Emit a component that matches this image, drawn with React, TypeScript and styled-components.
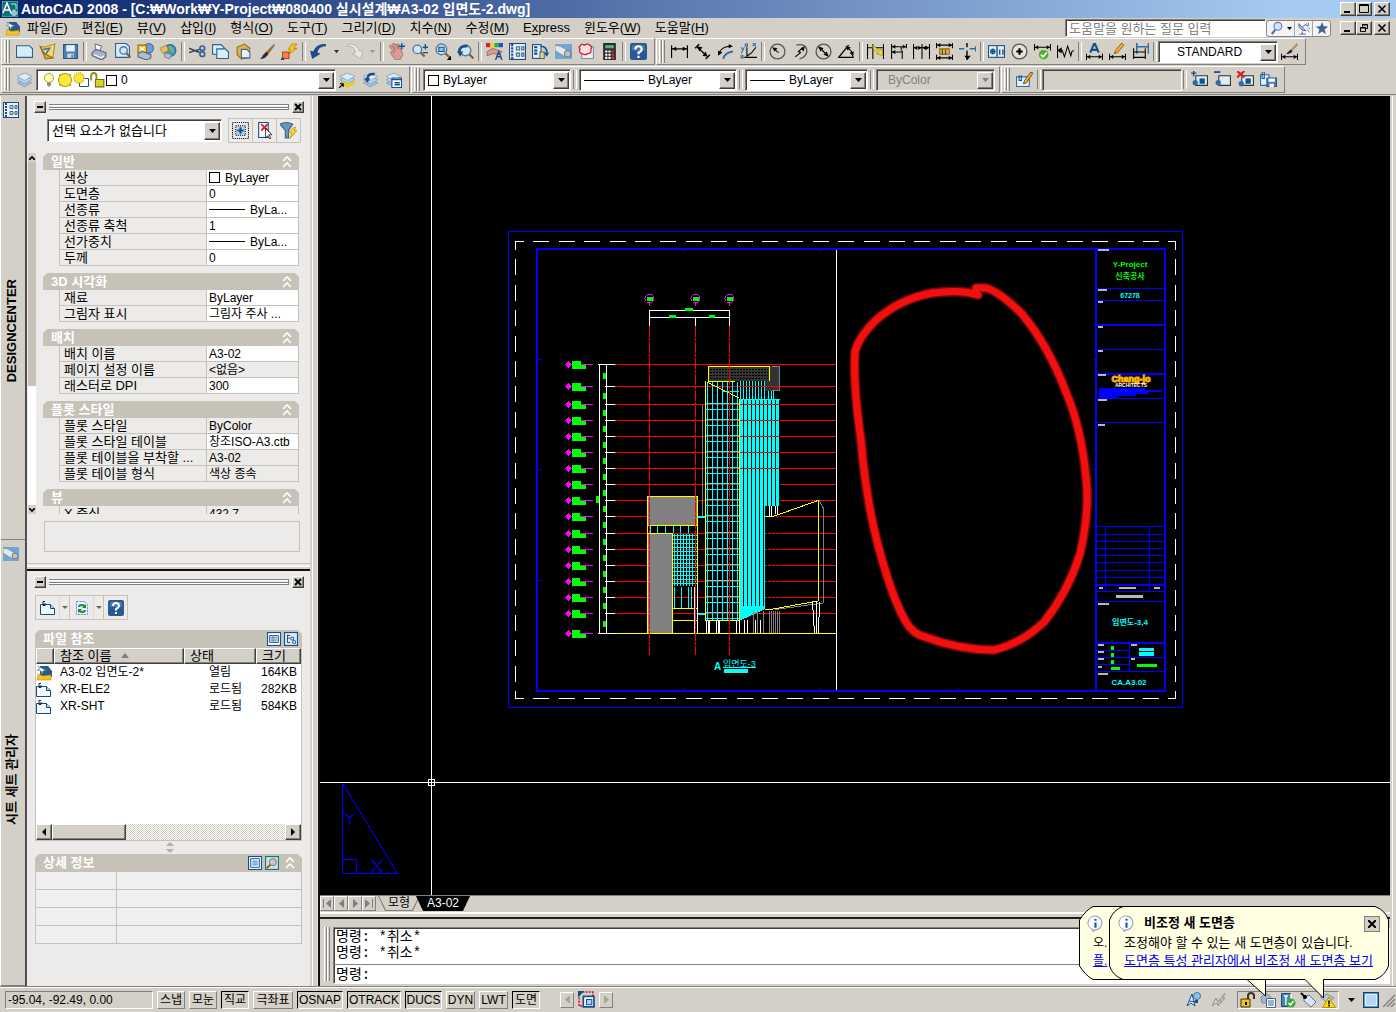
import React, { ReactNode } from 'react';
import styled, { createGlobalStyle, css } from 'styled-components';

const FACE = '#d4d0c8';
const PANEL = '#ecebea';
const HEAD = '#c6c2b8';
const SHADOW = '#808080';
const DARK = '#404040';
const FONT = '"Liberation Sans", "Noto Sans CJK KR", sans-serif';
const MONO = '"Liberation Mono", "Noto Sans CJK KR", monospace';

const Global = createGlobalStyle`
  * { box-sizing: border-box; }
  body { margin: 0; background: ${FACE}; font: 13px/16px ${FONT}; color: #000; overflow: hidden; }
  button, input, select { font: inherit; color: inherit; margin: 0; padding: 0; border: 0; border-radius: 0; background: none; }
  svg { display: block; }
  table { border-collapse: separate; border-spacing: 0; }
`;

const raised = css`
  background: ${FACE};
  border: 1px solid;
  border-color: #fff ${DARK} ${DARK} #fff;
  box-shadow: inset -1px -1px 0 ${SHADOW};
`;
const sunken = css`
  border: 1px solid;
  border-color: ${SHADOW} #fff #fff ${SHADOW};
  box-shadow: inset 1px 1px 0 ${DARK};
`;

/* ---------- icons ---------- */

const page = (x = 1, y = 3, w = 13, h = 11) => (
  <path d={`M${x + 0.5} ${y + 0.5}h${w - 4}l3 3v${h - 4}h-${w - 1}z`} fill="#d8ecf8" stroke="#2d5f92" />
);
const lens = (x: number, y: number, r = 4) => (
  <>
    <path d={`M${x + r * 0.7} ${y + r * 0.7}l4 4`} stroke="#8a5a3c" strokeWidth="2" />
    <circle cx={x} cy={y} r={r} fill="#cfe6f6" stroke="#56789a" strokeWidth="1.3" />
  </>
);
const layerStack = (top = '#dcebf8') => (
  <>
    <path d="M1 11l7 4 7-4-7-3z" fill="#9fbdd8" stroke="#7f9cba" strokeWidth=".7" />
    <path d="M1 8l7 4 7-4-7-3z" fill="#bcd4ea" stroke="#7f9cba" strokeWidth=".7" />
    <path d="M1 5l7 4 7-4-7-3z" fill={top} stroke="#7f9cba" strokeWidth=".7" />
  </>
);
const dimEnds = (y: number) => (
  <>
    <path d={`M.5 ${y - 3}v6M15.5 ${y - 3}v6M1 ${y}h14`} stroke="#000" />
    <path d={`M1 ${y}l3-2v4zM15 ${y}l-3-2v4z`} fill="#000" />
  </>
);
const sheet = (
  <>
    <rect x=".5" y=".5" width="15" height="15" fill="#e4f0fa" stroke="#1d4a82" />
    <path d="M3 1v14" stroke="#1d4a82" strokeWidth="2" strokeDasharray="2 1" />
    <path d="M7 3.500h3v3H7zM12 3.500h2v3h-2zM7 9.500h3v3H7zM12 9.500h2v3h-2z" fill="#f0d878" stroke="#386ca0" />
  </>
);
const xref = (
  <>
    <path d="M.5 4.500h10l4 4v6H.5z" fill="#f4faff" stroke="#0e4a86" />
    <path d="M10.500 4.500v4h4" fill="#b8dcf2" stroke="#0e4a86" />
    <path d="M5 1.500H3v4h2V3" fill="none" stroke="#222" />
  </>
);
const satellite = (
  <>
    <path d="M2 3q0 8 8 8z" fill="#b8c6e2" stroke="#42598c" />
    <path d="M6 7l5-4M10 5h3V2M6 12v3M3 15h7" stroke="#42598c" fill="none" />
    <path d="M11 9l3 4M12 7l3 2" stroke="#7d8dba" />
  </>
);

const ICONS: Record<string, ReactNode> = {
  app: (
    <>
      <rect width="16" height="16" fill="#0f7078" />
      <path d="M1 12L5 2l4 10M3 9h5" stroke="#fff" strokeWidth="1.500" fill="none" />
      <path d="M9 3h5v5M12 8v7M8 12h8M10 10h4v4h-4z" stroke="#bfe6ea" fill="none" />
      <path d="M0 0h16v16H0z" fill="none" stroke="#6fc0c4" />
    </>
  ),
  dwg: (
    <>
      <path d="M4 1h8l4 5v6H4z" fill="#2f5888" />
      <path d="M5 2l1 1M2 1l2 3-3 1 4 1 1 3 1-3 3-1-3-1z" fill="#fff" stroke="#3d74ac" strokeWidth=".6" />
      <path d="M1 15l1-6 5 2 8-1v5z" fill="#f6c41c" stroke="#c48c0c" strokeWidth=".6" />
    </>
  ),
  fresh: page(0, 2, 16, 12),
  open: (
    <>
      <path d="M1 3l4 1 10-3-2 13-8-4z" fill="#f4d674" stroke="#b88a1c" />
      <path d="M1 3l4 7 8 4-7 1z" fill="#dca83a" stroke="#8f6a14" />
      <path d="M4 6l6-1-4 6" stroke="#4878a4" strokeWidth="1.500" fill="none" />
    </>
  ),
  save: (
    <>
      <path d="M1.500 1.500h13v13h-13z" fill="#4f7fb8" stroke="#27558c" />
      <path d="M4 2h8v6H4z" fill="#e8f2fb" />
      <path d="M5 10h6v4H5z" fill="#cfd8e2" />
      <path d="M9 11h1v3H9z" fill="#27558c" />
    </>
  ),
  print: (
    <>
      <path d="M4 1l6 2-2 5H4z" fill="#fff" stroke="#6d7894" />
      <path d="M1 9l4-3 9 3v4l-4 3-9-4z" fill="#a9b2c8" stroke="#566182" />
      <path d="M3 11l7 3 2-2" stroke="#fff" fill="none" />
    </>
  ),
  preview: (
    <>
      {page(1, 0, 14, 14)}
      {lens(9, 7, 3.5)}
    </>
  ),
  publish: (
    <>
      <circle cx="11" cy="5" r="4.500" fill="#6aa2d4" stroke="#3d6a9c" />
      <path d="M1 2h8v7H1z" fill="#f0c63c" stroke="#94700c" />
      <path d="M3 4l4 3M7 4L3 7" stroke="#fff" />
      <path d="M1 10l4-2 8 3v3l-4 2-8-3z" fill="#b4bccc" stroke="#566182" />
    </>
  ),
  web: (
    <>
      <circle cx="9.500" cy="7" r="5.500" fill="#4a94cc" stroke="#2c6494" />
      <path d="M8 2q5 2 5 6-4 1-5-6z" fill="#6cc04c" />
      <path d="M0 5l6-3 2 5-5 3z" fill="#e8c24a" stroke="#8c741c" strokeWidth=".6" />
      <path d="M5 9l6 2-2 4-5-2z" fill="#b4bccc" stroke="#566182" strokeWidth=".6" />
    </>
  ),
  cut: (
    <>
      <path d="M0 5l10 4M0 9l10-3" stroke="#3a4456" strokeWidth="1.400" />
      <circle cx="12.500" cy="5" r="2.200" fill="none" stroke="#3b5f94" strokeWidth="1.600" />
      <circle cx="12.500" cy="10.500" r="2.200" fill="none" stroke="#3b5f94" strokeWidth="1.600" />
    </>
  ),
  copy: (
    <>
      {page(0, 1, 12, 10)}
      {page(4, 5, 12, 10)}
    </>
  ),
  paste: (
    <>
      <path d="M2 4l7-3 5 4-1 9-7 1-4-4z" fill="#e0b24a" stroke="#94701c" />
      <path d="M6 6h5l3 3v5H6z" fill="#e6f2fc" stroke="#3b6a9c" />
    </>
  ),
  brush: (
    <>
      <path d="M15 1L8 8l2 2 6-8z" fill="#9c6a44" />
      <path d="M8 8l2 2q-3 5-8 5 2-2 3-4z" fill="#2c2c34" />
    </>
  ),
  bolt: (
    <>
      <path d="M10 1h5l-3 4h3l-8 6 2-5H7z" fill="#f8c820" stroke="#b4780c" strokeWidth=".7" />
      <path d="M1.500 8.500h6v6h-6z" fill="#f4814c" stroke="#c03c14" />
      <path d="M0 15h3" stroke="#14508c" strokeWidth="2" />
    </>
  ),
  undo: <path d="M2 15l-2-8 3 1Q6 0 15 1v2Q8 3 7 9l3 1z" fill="#1f4c8a" />,
  redo: <path d="M14 15l2-8-3 1Q10 0 2 1v2q6 0 7 6l-3 1z" fill="#e6e6e2" stroke="#a9a9a4" strokeWidth=".7" />,
  caret: <path d="M5 6h6l-3 4z" fill="#1a2c66" />,
  caretDim: <path d="M5 6h6l-3 4z" fill="#98949c" />,
  pan: (
    <>
      <path d="M1 3l2-1 4 5-3-6 2-1 4 6-2-5 2 0 4 10-3 5H7L2 9l1-1 3 1z" fill="#d99c94" stroke="#a4605c" strokeWidth=".7" />
      <path d="M13 0v6M10 3h6" stroke="#14508c" strokeWidth="1.300" />
    </>
  ),
  zoomRt: (
    <>
      {lens(6, 6)}
      <path d="M11 4h5M13.500 1v5M11 9h5" stroke="#14508c" strokeWidth="1.200" />
    </>
  ),
  zoomWin: (
    <>
      {lens(7, 6, 5)}
      <path d="M4.500 4h5v4h-5z" fill="#8cc0e8" stroke="#14508c" />
      <path d="M16 12v4h-4z" />
    </>
  ),
  zoomPrev: (
    <>
      {lens(8, 7, 5)}
      <path d="M2 9q0-7 8-6" stroke="#1f4c8a" strokeWidth="2.500" fill="none" />
      <path d="M0 8h6l-3 5z" fill="#1f4c8a" />
    </>
  ),
  props: (
    <>
      <path d="M0 0h4v4H0z" fill="#e02020" />
      <path d="M4 0h4v4H4z" fill="#f0d020" />
      <path d="M8 0h4v4H8z" fill="#20b050" />
      <path d="M12 0h4v4h-4z" fill="#2050d0" />
      <path d="M1 8l5-3 9 3-2 3-6-1-6 2z" fill="#d99c94" stroke="#8c5850" strokeWidth=".7" />
      <path d="M9 16l3-8 3 8M10 13h4" stroke="#14508c" fill="none" strokeWidth="1.300" />
    </>
  ),
  center: sheet,
  palettes: (
    <>
      <rect x=".5" y="1.500" width="8" height="13" fill="#e4f0fa" stroke="#1d4a82" />
      <path d="M2 4h3M2 7h3M2 10h3" stroke="#1d4a82" strokeWidth="2" />
      <path d="M8 3q6 0 6 6" stroke="#14508c" fill="none" strokeWidth="1.500" />
      <path d="M7.500 8.500h4v6h-4z" fill="#f0d878" stroke="#386ca0" />
      <path d="M11 9h5l-2 4z" fill="#14508c" />
    </>
  ),
  sheets: (
    <>
      <path d="M0 1h16v14H0z" fill="#6fa6d4" />
      <path d="M0 2l5 1 10 6-1 5-6-2-8-5z" fill="#e4e8ea" stroke="#7d8c94" strokeWidth=".7" />
      <circle cx="12" cy="10" r="3" fill="#b9c2c6" stroke="#6c7c84" />
    </>
  ),
  markup: (
    <>
      <path d="M3.500 3.500h11v11h-11z" fill="#eaf2f8" stroke="#7890a4" />
      <path d="M2 3q1-3 4-1 3-2 5 0 3 2 1 4 1 4-3 4-3 2-5 0-4-1-2-4-2-2 0-3z" fill="#fbe0e0" stroke="#d02030" strokeWidth="1.200" />
    </>
  ),
  calc: (
    <>
      <path d="M2 0h12v16H2z" fill="#2c2c30" />
      <path d="M4 2h8v3H4z" fill="#5cb46c" />
      <path d="M4 7h2v2H4zM7 7h2v2H7zM4 10h2v2H4zM7 10h2v2H7zM4 13h2v2H4zM7 13h2v2H7z" fill="#fff" />
      <path d="M10 7h2v2h-2zM10 10h2v2h-2zM10 13h2v2h-2z" fill="#e04040" />
    </>
  ),
  help: (
    <>
      <rect width="16" height="16" rx="2" fill="#2a5a94" />
      <path d="M2 2h12v5H2z" fill="#5a8cc0" opacity=".6" />
      <path d="M5 6q0-3 3-3t3 3q0 1.500-3 3v1.500M8 12v2" stroke="#fff" strokeWidth="2" fill="none" />
    </>
  ),
  dimLinear: (
    <>
      <path d="M.5 2v12M15.500 2v12M1 5.500h14" stroke="#000" strokeWidth="1.200" />
      <path d="M1 5.500l4-2v4zM15 5.500l-4-2v4z" />
    </>
  ),
  dimAligned: (
    <>
      <path d="M1 5l4-4M11 15l4-4M3 4l9 8" stroke="#000" strokeWidth="1.200" />
      <path d="M3 3l5 1-3 4zM13 13l-5-1 3-4z" />
    </>
  ),
  dimArc: (
    <>
      <path d="M2 10Q4 3 13 3" stroke="#000" fill="none" />
      <path d="M1 12l0-5 4 2zM15 3l-4-2v4z" />
      <path d="M6 15q1-6 9-7" stroke="#2f6ca8" strokeWidth="1.800" fill="none" />
    </>
  ),
  dimOrd: (
    <>
      <path d="M6.500 4v10M4 13.500h12M7 12l4-3 4-5" stroke="#000" fill="none" />
      <path d="M1 4l2 3M4 4l-3 6M12 0l3 3M15 0l-3 3M5 1h2v2H5zM1 12h2v2H1z" stroke="#2f6ca8" fill="none" />
    </>
  ),
  dimRadius: (
    <>
      <circle cx="8" cy="8" r="7" fill="none" stroke="#555" strokeWidth="1.200" />
      <path d="M9 9L4 5" stroke="#000" />
      <path d="M3 4l5 1-3 3z" />
    </>
  ),
  dimJog: (
    <>
      <path d="M4 2q9-2 10 5 0 6-7 8" fill="none" stroke="#555" strokeWidth="1.200" />
      <path d="M3 13l5-4-2-1 5-4" fill="none" stroke="#000" />
      <path d="M12 3l-1 5-3-3z" />
    </>
  ),
  dimDia: (
    <>
      <circle cx="8" cy="8" r="7" fill="none" stroke="#555" strokeWidth="1.200" />
      <path d="M4 4l8 8" stroke="#000" />
      <path d="M3 3l5 2-3 3zM13 13l-5-2 3-3z" />
    </>
  ),
  dimAngle: (
    <>
      <path d="M0 13.500h15M1 13l9-11" stroke="#000" strokeWidth="1.300" />
      <path d="M8 4q6 3 6 9" stroke="#000" fill="none" />
      <path d="M7 3l5 1-3 3zM14 13l-3-4 4-1z" />
    </>
  ),
  dimQuick: (
    <>
      <path d="M.5 1v14M5.500 1v14M15.500 1v14M1 4.500h14" stroke="#000" />
      <path d="M5 2l7 5 2-1 1 6-6-2 2-1-5-3z" fill="#f8d820" stroke="#8c8410" strokeWidth=".6" />
    </>
  ),
  dimBase: (
    <>
      <path d="M1.500 1v14M10.500 3v4M15.500 1v4M2 3.500h13M2 8.500h9M11.500 7v8" stroke="#000" />
      <path d="M2 3.500l3-2v4zM15 3.500l-3-2v4zM2 8.500l3-2v4z" />
    </>
  ),
  dimCont: (
    <>
      <path d="M.5 1v14M8.500 1v14M15.500 1v14M1 4.500h14" stroke="#000" />
      <path d="M1 4.500l3-2v4zM8 4.500l-3-2v4zM9 4.500l3-2v4zM15 4.500l-3-2v4z" />
    </>
  ),
  dimSpace: (
    <>
      {dimEnds(2)}
      {dimEnds(14)}
      <path d="M3.500 5.500h9v5h-9z" fill="#f0b42c" stroke="#94640c" />
      <path d="M6 6v5M9 6v5" stroke="#1d4a82" />
    </>
  ),
  dimBreak: (
    <>
      <path d="M0 5.500h5M10 5.500h5" stroke="#2f6ca8" strokeWidth="1.400" />
      <path d="M7.500 0v4M7.500 7v9" stroke="#000" strokeWidth="1.300" />
      <path d="M8 16l-3-4h6z" />
      <path d="M15.500 3v5" stroke="#2f6ca8" />
    </>
  ),
  tol: (
    <>
      <rect x=".5" y="2.500" width="15" height="11" fill="#e4f0fa" stroke="#14508c" />
      <path d="M8.500 3v10M11 6v5M14 6v5M2 8h5M4.500 5.500v5" stroke="#14508c" strokeWidth="1.300" />
      <circle cx="4.500" cy="8" r="2" fill="none" stroke="#14508c" />
    </>
  ),
  centerMark: (
    <>
      <circle cx="8" cy="8" r="7" fill="#e4e2dc" stroke="#555" strokeWidth="1.200" />
      <path d="M8 5v6M5 8h6" stroke="#000" strokeWidth="2" />
    </>
  ),
  inspect: (
    <>
      {dimEnds(4)}
      <circle cx="9" cy="11" r="4.500" fill="#4cb428" />
      <path d="M6.500 11l2 2 3.500-4" stroke="#fff" strokeWidth="1.500" fill="none" />
    </>
  ),
  jogLine: <path d="M.5 2v12M1 7h4l2 6 3-10 3 9 1-4 2-1M1 7l3-2v4z" stroke="#000" fill="none" />,
  dimEdit: (
    <>
      <path d="M4 9l3.500-8h1L12 9M5.500 6.500h5" stroke="#14508c" strokeWidth="2" fill="none" />
      {dimEnds(13)}
    </>
  ),
  dimText: (
    <>
      <path d="M5 10l1-3 6-7 2 2-6 7z" fill="#f0b42c" stroke="#94440c" strokeWidth=".8" />
      {dimEnds(13)}
    </>
  ),
  dimUpdate: (
    <>
      <path d="M4.500 0v10M15.500 0v10M5 3.500h10" stroke="#2f6ca8" strokeWidth="1.500" />
      <path d="M1.500 5v10M12.500 5v10M2 8.500h10M2 13.500h10" stroke="#000" />
    </>
  ),
  dimStyle: (
    <>
      <path d="M15 0L9 6l1 2 6-6z" fill="#c08c5c" />
      <path d="M9 6l2 2q-3 3-6 2z" fill="#222" />
      {dimEnds(13)}
    </>
  ),
  layers: layerStack(),
  layerCur: (
    <>
      {layerStack()}
      <path d="M3 9l5 3 7-3v3l-7 4-5-3z" fill="#e8d020" />
      <path d="M0 16l4-4M1 12h3v3" stroke="#000" fill="none" />
    </>
  ),
  layerPrev: (
    <>
      {layerStack()}
      <path d="M5 8q0-6 7-5" stroke="#1f4c8a" strokeWidth="2.500" fill="none" />
      <path d="M2 7h6l-3 4z" fill="#1f4c8a" />
    </>
  ),
  layerState: (
    <>
      {layerStack()}
      <path d="M6.500 6.500h9v9h-9z" fill="#fff" stroke="#14508c" />
      <path d="M6 8h10M9 11h5M9 13h5" stroke="#14508c" strokeWidth="1.500" />
    </>
  ),
  bulb: (
    <>
      <circle cx="8" cy="6" r="4.500" fill="#ffffb0" stroke="#a8a030" />
      <path d="M6 10.500h4v3L8 15l-2-1.500z" fill="#909090" />
    </>
  ),
  sun: (
    <>
      <path d="M2 2h12v12H2z" fill="#c8b818" />
      <circle cx="8" cy="8" r="6.500" fill="#fce838" stroke="#a89818" />
    </>
  ),
  sunPage: (
    <>
      <path d="M6.500 6.500h9v8h-9z" fill="#fff" stroke="#14508c" />
      <circle cx="6" cy="6" r="5" fill="#fce838" stroke="#c8b818" strokeWidth="2" strokeDasharray="1 1" />
    </>
  ),
  unlock: (
    <>
      <path d="M6 7h8v7H6z" fill="#d8d428" stroke="#6c6c10" />
      <path d="M2 8V4q0-3 2.500-3T7 4v3" stroke="#8c8c20" strokeWidth="1.800" fill="none" />
    </>
  ),
  refEdit: (
    <>
      <path d="M.5 5.500h12v9H.5z" fill="#e4f2fc" stroke="#2d6ca4" />
      <path d="M3 4v5h2V4" stroke="#14508c" fill="none" />
      <path d="M7 12l1-3 6-8 2 1-6 9z" fill="#f0b42c" stroke="#5c3c14" strokeWidth=".8" />
    </>
  ),
  refAdd: (
    <>
      <path d="M4.500 4.500h11v9h-11z" fill="#dcecf8" stroke="#333" />
      <path d="M0 2h5M2.500 0v5" stroke="#14508c" strokeWidth="1.400" />
      <path d="M8 7h5v5H8z" fill="#14508c" />
      <circle cx="4" cy="11" r="2.500" fill="#2f6ca8" />
    </>
  ),
  refSub: (
    <>
      <path d="M4.500 4.500h11v9h-11z" fill="#dcecf8" stroke="#333" />
      <path d="M0 1h6" stroke="#14508c" strokeWidth="1.600" />
      <circle cx="4" cy="11" r="2.500" fill="#2f6ca8" />
    </>
  ),
  refDiscard: (
    <>
      <path d="M4.500 4.500h11v9h-11z" fill="#dcecf8" stroke="#333" />
      <path d="M8 7h5v5H8z" fill="#14508c" />
      <circle cx="4" cy="12" r="2.500" fill="#2f6ca8" />
      <path d="M0 0l7 6M7 0L0 6" stroke="#d42020" strokeWidth="2" />
    </>
  ),
  refSave: (
    <>
      <path d="M.5 3.500h8v10h-8z" fill="#e4f2fc" stroke="#2d6ca4" />
      <path d="M2 1v6h2V1" stroke="#14508c" fill="none" />
      <path d="M6.500 6.500h9v8h-9z" fill="#4f7fb8" stroke="#27558c" />
      <path d="M8 7h6v3H8zM9 12h4v3H9z" fill="#fff" />
    </>
  ),
  search: (
    <>
      <path d="M6 10l-4 5" stroke="#5a6ea4" strokeWidth="2.500" />
      <circle cx="9" cy="6" r="4.500" fill="#cfe6f6" stroke="#6a80b4" strokeWidth="1.300" />
    </>
  ),
  satellite,
  star: <path d="M8 1l2 5 5 .3-4 3.400L12.500 15 8 12l-4.500 3L5 9.700 1 6.300 6 6z" fill="#4a5f94" />,
  quickSel: (
    <>
      <path d="M.5 .5h15v15H.5z" fill="none" stroke="#000" strokeDasharray="1 1" />
      <path d="M3.500 3.500h9v9h-9z" fill="#b9d6ee" stroke="#000" strokeDasharray="1 1" />
      <path d="M8 5v6M5 8h6" stroke="#14508c" strokeWidth="2" />
    </>
  ),
  pick: (
    <>
      <path d="M2.500 .5h9v14h-9z" fill="#f4faff" stroke="#1d4a82" />
      <path d="M5 2l6 6M11 2L5 8" stroke="#d42020" strokeWidth="1.700" />
      <path d="M9 6v9l2-2 2 3 1-1-2-3h3z" fill="#fff" stroke="#000" strokeWidth=".7" />
    </>
  ),
  filter: (
    <>
      <path d="M0 2q6-3 12 0L8 8v7H5V8z" fill="#6c94bc" stroke="#3a5f88" />
      <path d="M13 5l-5 5h3l-2 6 7-8h-3l2-3z" fill="#f8d820" stroke="#a8840c" strokeWidth=".6" />
    </>
  ),
  xref,
  refresh: (
    <>
      <path d="M2.500 1.500h8l3 3v10h-11z" fill="#e8f0ff" stroke="#7080e0" strokeDasharray="2 1" />
      <path d="M5 7q0-2 3-2l3 1M11 10q0 2-3 2l-3-1" stroke="#189030" strokeWidth="2" fill="none" />
      <path d="M12 4v4H8zM4 13V9h4z" fill="#189030" />
    </>
  ),
  listView: (
    <>
      <rect x=".5" y=".5" width="15" height="15" fill="#fff" stroke="#14508c" strokeWidth="1.500" />
      <path d="M3 4h10v8H3z" fill="#dcecf8" stroke="#14508c" />
      <path d="M4 6h8M4 8h8M4 10h8M7 4v8" stroke="#6c84a8" />
    </>
  ),
  treeView: (
    <>
      <rect x=".5" y=".5" width="15" height="15" fill="#dcecf8" stroke="#14508c" strokeWidth="1.500" />
      <path d="M4 3v9h3M4 7h3M4 4h3" stroke="#333" fill="none" />
      <path d="M8 6h3v3H8zM10 10h3v3h-3z" fill="#fff" stroke="#14508c" />
    </>
  ),
  detailView: (
    <>
      <rect x=".5" y=".5" width="15" height="15" fill="#fff" stroke="#14508c" strokeWidth="1.500" />
      <path d="M3 3h10v10H3z" fill="#dcecf8" stroke="#14508c" />
      <path d="M5 6h6M5 8h6M5 10h6" stroke="#4c78b0" />
    </>
  ),
  thumbView: (
    <>
      <rect x=".5" y=".5" width="15" height="15" fill="#cfe0dc" stroke="#0c7c7c" strokeWidth="1.500" />
      <circle cx="9" cy="7" r="4" fill="#c8c8c8" stroke="#6c6c6c" />
      <path d="M6 10l-4 4" stroke="#8a3c1c" strokeWidth="2" />
    </>
  ),
  annot: (
    <>
      <path d="M1 14L6 2l3 12-4-3zM3 9l7 1" stroke="#14508c" fill="#e4f0fa" />
      <circle cx="11" cy="4" r="3.500" fill="#8cc0e8" stroke="#3f78ac" />
      <path d="M9 8h3v3H9z" fill="#14508c" />
    </>
  ),
  annotDim: (
    <>
      <path d="M1 14L5 6l3 8-3-3z" stroke="#8c8c88" fill="#e4e2dc" />
      <path d="M14 1l-7 8h3l-1 3 5-6h-2z" fill="#b8b6b0" stroke="#848480" strokeWidth=".6" />
    </>
  ),
  padlock: (
    <>
      <path d="M1 7h9v8H1z" fill="#f0c418" stroke="#3c3004" />
      <path d="M8 7V4q0-3 3-3t3 3v3" stroke="#3c3410" strokeWidth="2" fill="none" />
      <path d="M5 10h2v3H5z" />
    </>
  ),
  notes: (
    <>
      <path d="M1 5l5-4 5 4-1 6H2z" fill="#a4b8cc" stroke="#7890a4" />
      <path d="M6.500 6.500h9v9h-9z" fill="#fff" stroke="#3c6494" />
      <path d="M8 9h6M8 11h6M8 13h6" stroke="#3c6494" />
    </>
  ),
  standards: (
    <>
      <path d="M1.500 1.500h9v13h-9z" fill="#4c84b4" stroke="#1d4a82" />
      <path d="M4 4h4M6 4v9M11 2v6" stroke="#fff" strokeWidth="1.500" />
      <circle cx="11" cy="11" r="4.500" fill="#38a838" />
      <path d="M8.500 11l2 2 3-4" stroke="#fff" strokeWidth="1.500" fill="none" />
    </>
  ),
  tag: (
    <>
      <path d="M4 5l5-2 7 7-5 5-7-6z" fill="#dce6f2" stroke="#5c7494" />
      <path d="M1 1l4 4" stroke="#000" strokeWidth="2" />
      <circle cx="5" cy="5" r="2" />
    </>
  ),
  warn: (
    <>
      <path d="M0 5l7-3 7 4-6 5z" fill="#b4c6da" stroke="#7890a4" />
      <path d="M9 5l6.500 10.500h-13z" fill="#fcd818" stroke="#b88c0c" />
      <path d="M9 8.500v4M9 13v1.500" stroke="#000" strokeWidth="1.500" />
    </>
  ),
  screen: (
    <>
      <rect x=".5" y=".5" width="15" height="15" fill="#5a94c8" stroke="#14406c" />
      <path d="M3 3h10v10H3z" fill="#b4d8f4" />
      <path d="M2.500 2.500h11v11h-11z" fill="none" stroke="#e4f2fc" />
    </>
  ),
  viewport: (
    <>
      <path d="M1 1h13v13H1z" fill="none" stroke="#d42020" strokeWidth="1.500" strokeDasharray="2 1" />
      <path d="M5 5h10v10H5z" fill="#fff" stroke="#14508c" strokeWidth="1.600" />
      <path d="M8 8h5v5H8z" fill="#a8d0f0" stroke="#14508c" />
      <path d="M0 0h6L0 6z" fill="#14508c" />
    </>
  ),
  info: (
    <>
      <path d="M8 1a6.500 6.500 0 1 1-1 13l-1 2-1-2.500A6.500 6.500 0 0 1 8 1z" fill="#fff" stroke="#8c9cb4" />
      <path d="M8 7v5M8 3.500v2" stroke="#1d50b8" strokeWidth="2" />
    </>
  ),
  chevrons: <path d="M4 7l4-4 4 4M4 13l4-4 4 4" stroke="#fff" strokeWidth="1.600" fill="none" />,
};

const Icon = ({ name, size = 16 }: { name: string; size?: number }) => (
  <IconSvg width={size} height={size} viewBox="0 0 16 16" aria-hidden="true">
    {ICONS[name]}
  </IconSvg>
);
const IconSvg = styled.svg`
  flex: none;
`;

/* ---------- window chrome ---------- */

const Shell = styled.div`
  position: relative;
  display: flex;
  flex-direction: column;
  min-height: 100vh;
`;
const TitleBar = styled.header`
  display: flex;
  align-items: center;
  height: 18px;
  padding: 0 6px 0 2px;
  gap: 3px;
  background: linear-gradient(90deg, #0a246a, #a6caf0 92%);
  color: #fff;
  h1 {
    flex: 1;
    margin: 0;
    font-size: 14px;
    line-height: 18px;
    font-weight: bold;
    white-space: nowrap;
  }
`;
const WindowButtons = styled.div`
  display: flex;
  button:last-child {
    margin-left: 2px;
  }
`;
const SmallButton = styled.button<{ $w?: number; $h?: number }>`
  ${raised}
  width: ${(p) => p.$w ?? 16}px;
  height: ${(p) => p.$h ?? 14}px;
  flex: none;
  display: flex;
  align-items: center;
  justify-content: center;
`;
const MenuBar = styled.nav`
  display: flex;
  align-items: center;
  height: 20px;
  padding: 0 6px 0 5px;
  ul {
    flex: 1;
    display: flex;
    gap: 14px;
    margin: 0;
    padding: 0 0 0 7px;
    list-style: none;
  }
  u {
    text-underline-offset: 2px;
  }
`;
const MenuButton = styled.button`
  white-space: nowrap;
  line-height: 18px;
`;
const HelpSearch = styled.div`
  display: flex;
  align-items: center;
  height: 18px;
  margin-right: 9px;
  input {
    ${sunken}
    width: 201px;
    height: 18px;
    padding: 0 3px;
    background: #fff;
    line-height: 15px;
  }
  input::placeholder {
    color: #808080;
  }
`;
const HelpTools = styled.div`
  display: flex;
  height: 17px;
  border: 1px solid #84848c;
  border-radius: 3px;
  background: #f4f4f6;
  button {
    display: flex;
    align-items: center;
    justify-content: center;
    width: 18px;
  }
  button + button {
    border-left: 1px solid #a4a4ac;
  }
  button:first-child {
    width: 27px;
    gap: 3px;
  }
`;
const ToolRow = styled.div`
  display: flex;
  height: 27px;
  margin-bottom: 1px;
  padding-left: 1px;
  gap: 1px;
`;
const Toolbar = styled.div`
  display: flex;
  align-items: center;
  height: 27px;
  padding: 0 4px 0 2px;
  border: 1px solid;
  border-color: #fff ${SHADOW} ${SHADOW} #fff;
`;
const Grip = styled.span<{ $h?: number }>`
  flex: none;
  width: 6px;
  height: ${(p) => p.$h ?? 23}px;
  margin-right: 3px;
  border: solid;
  border-width: 0 1px 0 1px;
  border-color: #fff ${SHADOW} #fff #fff;
  background: linear-gradient(90deg, ${FACE} 1px, ${SHADOW} 1px 2px, #fff 2px 3px, ${FACE} 3px);
`;
const ToolButton = styled.button<{ $w?: number }>`
  flex: none;
  width: ${(p) => p.$w ?? 23}px;
  height: 23px;
  display: flex;
  align-items: center;
  justify-content: center;
`;
const Sep = styled.span<{ $w?: number }>`
  flex: none;
  width: ${(p) => p.$w ?? 6}px;
  height: 19px;
  display: flex;
  justify-content: center;
  &::before {
    content: '';
    width: 2px;
    border-left: 1px solid ${SHADOW};
    border-right: 1px solid #fff;
  }
`;
const ComboBox = styled.label<{ $w?: number; $h?: number; $off?: boolean }>`
  ${sunken}
  flex: ${(p) => (p.$w ? 'none' : '1')};
  width: ${(p) => (p.$w ? `${p.$w}px` : 'auto')};
  height: ${(p) => p.$h ?? 22}px;
  display: flex;
  align-items: center;
  padding: 2px 1px 1px 4px;
  background: ${(p) => (p.$off ? FACE : '#fff')};
  color: ${(p) => (p.$off ? SHADOW : '#000')};
  font-size: ${(p) => (p.$w ? 12 : 13)}px;
  select {
    flex: 1;
    min-width: 0;
    height: 17px;
    appearance: none;
    outline: none;
    opacity: 1;
    text-overflow: clip;
  }
`;
const Arrow = styled.span`
  ${raised}
  flex: none;
  width: 16px;
  height: 100%;
  display: flex;
  align-items: center;
  justify-content: center;
`;
const Swatch = styled.span`
  flex: none;
  width: 11px;
  height: 11px;
  border: 1px solid #000;
  background: #fff;
`;
const Rule = styled.span<{ $w: number }>`
  flex: none;
  width: ${(p) => p.$w}px;
  height: 1px;
  background: #000;
`;
const Lead = styled.span`
  flex: none;
  display: flex;
  align-items: center;
  margin-right: 4px;
`;

const Down = ({ color = '#000' }) => (
  <svg width="7" height="4" aria-hidden="true">
    <path d="M0 0h7L3.500 4z" fill={color} />
  </svg>
);

const Combo = ({ w, h, off, value, label, lead }: { w?: number; h?: number; off?: boolean; value: string; label: string; lead?: ReactNode }) => (
  <ComboBox $w={w} $h={h} $off={off}>
    {lead && <Lead>{lead}</Lead>}
    <select aria-label={label} disabled={off} defaultValue={value}>
      <option>{value}</option>
    </select>
    <Arrow>
      <Down color={off ? SHADOW : '#000'} />
    </Arrow>
  </ComboBox>
);

const RefName = styled.input`
  ${sunken}
  width: 140px;
  height: 22px;
  padding: 0 4px;
`;

const Tools = ({ items }: { items: string[] }) => (
  <>
    {items.map((n, i) =>
      n === '|' ? (
        <Sep key={i} />
      ) : (
        <ToolButton key={i} $w={n.startsWith('caret') ? 13 : undefined} aria-label={n}>
          <Icon name={n} size={n === 'caret' || n === 'caretDim' ? 13 : 17} />
        </ToolButton>
      ),
    )}
  </>
);

const STANDARD = ['fresh', 'open', 'save', '|', 'print', 'preview', 'publish', 'web', '|', 'cut', 'copy', 'paste', 'brush', 'bolt', '|', 'undo', 'caret', 'redo', 'caretDim', '|', 'pan', 'zoomRt', 'zoomWin', 'zoomPrev', '|', 'props', 'center', 'palettes', 'sheets', 'markup', 'calc', '|', 'help'];
const DIMENSION = ['dimLinear', 'dimAligned', 'dimArc', 'dimOrd', '|', 'dimRadius', 'dimJog', 'dimDia', 'dimAngle', '|', 'dimQuick', 'dimBase', 'dimCont', 'dimSpace', 'dimBreak', '|', 'tol', 'centerMark', 'inspect', 'jogLine', '|', 'dimEdit', 'dimText', 'dimUpdate', '|'];
const MENUS: [string, string, string][] = [
  ['파일(', 'F', ')'], ['편집(', 'E', ')'], ['뷰(', 'V', ')'], ['삽입(', 'I', ')'], ['형식(', 'O', ')'], ['도구(', 'T', ')'],
  ['그리기(', 'D', ')'], ['치수(', 'N', ')'], ['수정(', 'M', ')'], ['E', 'x', 'press'], ['윈도우(', 'W', ')'], ['도움말(', 'H', ')'],
];

const Controls = ({ restore }: { restore?: boolean }) => (
  <WindowButtons>
    <SmallButton aria-label="최소화">
      <svg width="10" height="10"><path d="M1 7h6v2H1z" /></svg>
    </SmallButton>
    <SmallButton aria-label="크기">
      <svg width="10" height="10">
        {restore ? (
          <path d="M3.500 4V1.500h5v4H6M3 2h6M1.500 4.500h5v4h-5zM1 5h6" fill="none" stroke="#000" />
        ) : (
          <path d="M.5 .5h9v8h-9zM1 1.500h8" fill="none" stroke="#000" />
        )}
      </svg>
    </SmallButton>
    <SmallButton aria-label="닫기">
      <svg width="10" height="10"><path d="M1.500 1.500l7 7M8.500 1.500l-7 7" stroke="#000" strokeWidth="1.600" /></svg>
    </SmallButton>
  </WindowButtons>
);

/* ---------- palettes ---------- */

const Main = styled.main`
  flex: 1;
  display: flex;
  min-height: 0;
  padding-top: 1px;
  border-top: 1px solid ${SHADOW};
`;
const Strip = styled.aside`
  flex: none;
  width: 27px;
  display: flex;
  flex-direction: column;
  border-left: 1px solid #fff;
  border-right: 2px solid #505050;
`;
const StripTab = styled.section<{ $h?: number }>`
  flex: ${(p) => (p.$h ? 'none' : '1')};
  height: ${(p) => (p.$h ? `${p.$h}px` : 'auto')};
  display: flex;
  flex-direction: column;
  justify-content: space-between;
  padding: 6px 0 0 2px;
  border-bottom: 1px solid ${SHADOW};
`;
const Sideways = styled.h2<{ $below: number }>`
  margin: 0 0 ${(p) => p.$below}px;
  width: 17px;
  font-size: 13px;
  line-height: 17px;
  font-weight: bold;
  white-space: nowrap;
  writing-mode: vertical-rl;
  text-orientation: sideways;
  transform: rotate(180deg);
`;
const Palettes = styled.div`
  flex: none;
  width: 291px;
  display: flex;
  flex-direction: column;
  border-right: 1px solid #e8e6e0;
  padding-right: 7px;
  background: linear-gradient(90deg, ${FACE} 285px, #fff 285px 286px, ${FACE} 286px);
`;
const Palette = styled.section<{ $grow?: boolean }>`
  flex: ${(p) => (p.$grow ? '1' : 'none')};
  display: flex;
  flex-direction: column;
  padding: 5px 5px 0 7px;
  background: ${PANEL};
`;
const Divider = styled.div`
  height: 8px;
  border-top: 1px solid ${HEAD};
  border-bottom: 2px solid #101010;
  background: linear-gradient(${PANEL} 2px, #fff 2px 3px, ${FACE} 3px);
`;
const PaletteBar = styled.div`
  display: flex;
  align-items: center;
  height: 12px;
  gap: 3px;
  margin-right: 1px;
`;
const DragBar = styled.span`
  flex: 1;
  height: 6px;
  border: solid ${SHADOW};
  border-width: 1px 1px 1px 0;
  background: linear-gradient(#fff 1px, ${PANEL} 1px 2px, ${SHADOW} 2px 3px, #fff 3px);
`;
const PaletteTitle = () => (
  <PaletteBar>
    <SmallButton $w={12} $h={12} aria-label="최소화">
      <svg width="6" height="2"><path d="M0 0h6v2H0z" /></svg>
    </SmallButton>
    <DragBar />
    <SmallButton $w={12} $h={12} aria-label="닫기">
      <svg width="8" height="8"><path d="M1 1l6 6M7 1L1 7" stroke="#000" strokeWidth="2" /></svg>
    </SmallButton>
  </PaletteBar>
);
const PickRow = styled.div`
  display: flex;
  align-items: center;
  gap: 6px;
  margin: 5px 4px 10px 13px;
`;
const CellGroup = styled.div`
  display: flex;
  align-self: flex-start;
  border: 1px solid ${HEAD};
`;
const Cell = styled.div`
  display: flex;
  & + & {
    border-left: 1px solid ${HEAD};
  }
  button + button {
    border-left: 1px solid #dcdad4;
  }
`;
const PropPane = styled.div`
  display: flex;
  height: 361px;
  margin-left: -6px;
  overflow: hidden;
`;
const ThinScroll = styled.div`
  flex: none;
  width: 8px;
  display: flex;
  flex-direction: column;
  background: #fff;
  button {
    height: 9px;
    display: flex;
    align-items: center;
    justify-content: center;
    background: ${FACE};
  }
  span {
    height: 224px;
    background: ${HEAD};
  }
  button:last-child {
    margin-top: auto;
  }
`;
const Groups = styled.div`
  flex: 1;
  margin: 0 6px 0 7px;
  display: flex;
  flex-direction: column;
  gap: 7px;
`;
const GroupHead = styled.h3<{ $h?: number }>`
  flex: none;
  display: flex;
  align-items: center;
  height: ${(p) => p.$h ?? 17}px;
  margin: 0;
  padding: 0 4px 0 8px;
  gap: 3px;
  background: ${HEAD};
  color: #fff;
  font-size: 13px;
  line-height: 16px;
  clip-path: polygon(4px 0, calc(100% - 4px) 0, 100% 4px, 100% 100%, 0 100%, 0 4px);
  span {
    flex: 1;
  }
`;
const PropTable = styled.table`
  width: calc(100% - 16px);
  margin-left: 16px;
  table-layout: fixed;
  th, td {
    height: 16px;
    padding: 0 0 0 4px;
    border: solid ${HEAD};
    border-width: 0 1px 1px 0;
    line-height: 14px;
    font-weight: normal;
    text-align: left;
    white-space: nowrap;
    overflow: hidden;
  }
  th {
    width: 148px;
    border-left-width: 1px;
  }
  td {
    padding-left: 2px;
    font-size: 12px;
  }
`;
const Value = styled.td<{ $ro?: boolean }>`
  background: ${(p) => (p.$ro ? PANEL : '#fff')};
  div {
    display: flex;
    align-items: center;
    gap: 5px;
    height: 14px;
  }
`;
const InfoBox = styled.div`
  height: 31px;
  margin: 7px 5px 11px 10px;
  border: 1px solid ${HEAD};
`;

type Row = { k: string; v: string; ro?: boolean; mark?: 'sw' | 'ln' };
const GROUPS: { name: string; rows: Row[] }[] = [
  {
    name: '일반',
    rows: [
      { k: '색상', v: 'ByLayer', mark: 'sw' },
      { k: '도면층', v: '0' },
      { k: '선종류', v: 'ByLa...', mark: 'ln' },
      { k: '선종류 축척', v: '1' },
      { k: '선가중치', v: 'ByLa...', mark: 'ln' },
      { k: '두께', v: '0' },
    ],
  },
  { name: '3D 시각화', rows: [{ k: '재료', v: 'ByLayer' }, { k: '그림자 표시', v: '그림자 주사 ...' }] },
  { name: '배치', rows: [{ k: '배치 이름', v: 'A3-02' }, { k: '페이지 설정 이름', v: '<없음>', ro: true }, { k: '래스터로 DPI', v: '300' }] },
  {
    name: '플롯 스타일',
    rows: [
      { k: '플롯 스타일', v: 'ByColor', ro: true },
      { k: '플롯 스타일 테이블', v: '창조ISO-A3.ctb' },
      { k: '플롯 테이블을 부착할 ...', v: 'A3-02', ro: true },
      { k: '플롯 테이블 형식', v: '색상 종속', ro: true },
    ],
  },
  { name: '뷰', rows: [{ k: 'X 중심', v: '432.7', ro: true }] },
];

const Properties = () => (
  <Palette>
    <PaletteTitle />
    <PickRow>
      <Combo h={23} value="선택 요소가 없습니다" label="선택 요소" />
      <CellGroup>
        {['quickSel', 'pick', 'filter'].map((n) => (
          <Cell key={n}>
            <ToolButton aria-label={n}>
              <Icon name={n} size={17} />
            </ToolButton>
          </Cell>
        ))}
      </CellGroup>
    </PickRow>
    <PropPane>
      <ThinScroll>
        <button aria-label="위로"><svg width="6" height="4"><path d="M0 4l3-3 3 3" stroke="#000" strokeWidth="1.600" fill="none" /></svg></button>
        <span />
        <button aria-label="아래로"><svg width="6" height="4"><path d="M0 0l3 3 3-3" stroke="#000" strokeWidth="1.600" fill="none" /></svg></button>
      </ThinScroll>
      <Groups>
        {GROUPS.map((g) => (
          <div key={g.name}>
            <GroupHead>
              <span>{g.name}</span>
              <Icon name="chevrons" />
            </GroupHead>
            <PropTable>
              <tbody>
                {g.rows.map((r) => (
                  <tr key={r.k}>
                    <th scope="row">{r.k}</th>
                    <Value $ro={r.ro}>
                      <div>
                        {r.mark === 'sw' && <Swatch />}
                        {r.mark === 'ln' && <Rule $w={36} />}
                        {r.v}
                      </div>
                    </Value>
                  </tr>
                ))}
              </tbody>
            </PropTable>
          </div>
        ))}
      </Groups>
    </PropPane>
    <InfoBox />
  </Palette>
);

const RefTools = styled(CellGroup)`
  margin: 7px 0 10px 1px;
`;
const Card = styled.div<{ $grow?: boolean }>`
  flex: ${(p) => (p.$grow ? '1' : 'none')};
  display: flex;
  flex-direction: column;
  margin: 0 3px 0 1px;
`;
const List = styled.div`
  flex: 1;
  display: flex;
  flex-direction: column;
  justify-content: space-between;
  border: solid ${HEAD};
  border-width: 0 1px 1px;
  background: #fff;
`;
const FileTable = styled.table`
  width: 100%;
  table-layout: fixed;
  font-size: 12px;
  line-height: 15px;
  th {
    ${raised}
    height: 16px;
    padding: 0 5px;
    font-size: 13px;
    line-height: 14px;
    font-weight: normal;
    text-align: left;
    white-space: nowrap;
  }
  th svg {
    display: inline-block;
    margin-left: 6px;
    vertical-align: 2px;
  }
  td {
    height: 17px;
    padding: 0 0 0 6px;
    white-space: nowrap;
    overflow: hidden;
  }
  td:first-child {
    padding: 0;
  }
  td:nth-child(3) {
    padding-left: 25px;
  }
  td:last-child {
    padding: 0 4px 0 0;
    text-align: right;
  }
`;
const HScroll = styled.div`
  display: flex;
  height: 16px;
  background: repeating-conic-gradient(#fff 0 25%, ${FACE} 0 50%) 0 0 / 2px 2px;
  span {
    ${raised}
    width: 74px;
    margin-right: auto;
  }
`;
const Splitter = styled.div`
  display: flex;
  justify-content: center;
  padding: 1px 0;
  height: 13px;
`;
const DetailTable = styled.table`
  width: 100%;
  table-layout: fixed;
  background: #efefef;
  td {
    height: 18px;
    padding: 0;
    border: solid ${HEAD};
    border-width: 0 1px 1px 0;
  }
  td:first-child {
    width: 82px;
    border-left-width: 1px;
  }
`;
const PaletteFoot = styled.div`
  height: 42px;
`;

const FILES = [
  ['dwg', 'A3-02 입면도-2*', '열림', '164KB'],
  ['xref', 'XR-ELE2', '로드됨', '282KB'],
  ['xref', 'XR-SHT', '로드됨', '584KB'],
];

const tri = (d: string, w: number, h: number, fill = '#000') => (
  <svg width={w} height={h} aria-hidden="true"><path d={d} fill={fill} /></svg>
);

const References = () => (
  <Palette $grow>
    <PaletteTitle />
    <RefTools>
      <Cell>
        <ToolButton aria-label="부착"><Icon name="xref" /></ToolButton>
        <ToolButton $w={10} aria-label="부착 옵션">{tri('M0 0h6L3 3z', 6, 3, '#666')}</ToolButton>
      </Cell>
      <Cell>
        <ToolButton aria-label="갱신"><Icon name="refresh" /></ToolButton>
        <ToolButton $w={10} aria-label="갱신 옵션">{tri('M0 0h6L3 3z', 6, 3, '#666')}</ToolButton>
      </Cell>
      <Cell>
        <ToolButton aria-label="도움말"><Icon name="help" /></ToolButton>
      </Cell>
    </RefTools>
    <Card $grow>
      <GroupHead $h={18}>
        <span>파일 참조</span>
        <Icon name="listView" size={14} />
        <Icon name="treeView" size={14} />
      </GroupHead>
      <List>
        <FileTable>
          <colgroup>
            <col style={{ width: 18 }} />
            <col />
            <col style={{ width: 72 }} />
            <col style={{ width: 45 }} />
          </colgroup>
          <thead>
            <tr>
              <th aria-label="종류" />
              <th>참조 이름 {tri('M0 5h8L4 0z', 8, 5, SHADOW)}</th>
              <th>상태</th>
              <th>크기</th>
            </tr>
          </thead>
          <tbody>
            {FILES.map((f) => (
              <tr key={f[1]}>
                <td><Icon name={f[0]} /></td>
                <td>{f[1]}</td>
                <td>{f[2]}</td>
                <td>{f[3]}</td>
              </tr>
            ))}
          </tbody>
        </FileTable>
        <HScroll>
          <SmallButton $h={16} aria-label="왼쪽">{tri('M4 0v8L0 4z', 4, 8)}</SmallButton>
          <span />
          <SmallButton $h={16} aria-label="오른쪽">{tri('M0 0v8l4-4z', 4, 8)}</SmallButton>
        </HScroll>
      </List>
    </Card>
    <Splitter>{tri('M0 4h8L4 0zM0 7h8l-4 4z', 8, 11, '#b4b0a8')}</Splitter>
    <Card>
      <GroupHead $h={18}>
        <span>상세 정보</span>
        <Icon name="detailView" size={14} />
        <Icon name="thumbView" size={14} />
        <Icon name="chevrons" />
      </GroupHead>
      <DetailTable aria-label="상세 정보">
        <tbody>
          {[0, 1, 2, 3].map((i) => (
            <tr key={i}>
              <td />
              <td />
            </tr>
          ))}
        </tbody>
      </DetailTable>
    </Card>
    <PaletteFoot />
  </Palette>
);

/* ---------- drawing ---------- */

const LEVELS = [364.5, 386.5, 404.5, 420.5, 436.5, 452.5, 468.5, 484.5, 500.5, 516.5, 533.5, 549.5, 565.5, 581.5, 597.5, 613.5, 633.5];
const GRIDS = [649.5, 695.5, 729.5];
const CYAN = '#00ffff';
const CLOUD =
  'M978 295Q962 289 932 293Q900 299 876 320Q858 338 855 352Q853 385 861 440Q866 500 878 545Q892 598 906 622Q913 634 925 637Q960 650 994 650Q1022 643 1044 622Q1068 592 1080 554Q1090 510 1086 478Q1082 430 1066 392Q1048 345 1022 314Q1000 292 986 288L976 288';
const range = (from: number, to: number, step: number) => {
  const out: number[] = [];
  for (let v = from; v <= to; v += step) out.push(v);
  return out;
};
const vlines = (xs: number[], y1: number, y2: number) => xs.map((x) => `M${x} ${y1}V${y2}`).join('');
const hlines = (ys: number[], x1: number, x2: number) => ys.map((y) => `M${x1} ${y}H${x2}`).join('');

const Sheet = () => (
  <g fill="none" stroke="#0000ff">
    <path d="M508.500 231.500H1182.500V707.500H508.500z" />
    <g stroke="#fff" strokeDasharray="16 9.4" strokeDashoffset="7">
      <path d="M515 241.500H1176" />
      <path d="M515 698.500H1176" />
      <path d="M515.500 241V699" />
      <path d="M1175.500 241V699" />
    </g>
    <path d="M537 249H1165V691H537zM1096 249V691" strokeWidth="2" />
    <path d="M683.500 250v2M820.500 250v2M683.500 688v2M820.500 688v2M958.500 688v2M538 359.500h3M538 469.500h3M538 580.500h3M1093 359.500h3M1093 469.500h3M1093 580.500h3" />
    <path d={hlines([288.5, 300.5, 349.5, 398.5, 422.5, 526.5, 534.5, 541.5, 548.5, 555.5, 562.5, 570.5, 577.5, 591.5, 601.5, 657.5, 671.5], 1097, 1165)} />
    <path d="M1097 650.500h32M1097 664.500h32M1105.500 526V591M1149.500 526V591M1129.500 643V671" />
    <path d={hlines([325, 374, 585, 643], 1097, 1165)} strokeWidth="2" />
    <path d="M836.500 250V690" stroke="#fff" />
  </g>
);

const TitleBlock = () => (
  <g fontFamily={FONT} fontWeight="bold" textAnchor="middle">
    <path
      fill="#b8b8b8"
      d="M1098 249h11v2h-11zM1098 289h9v2h-9zM1098 301h5v2h-5zM1098 326h5v2h-5zM1098 350h5v2h-5zM1098 374h8v2h-8zM1098 399h9v2h-9zM1098 424h7v2h-7zM1099 587h4v2h-4zM1119 587h17v2h-17zM1154 587h6v2h-6zM1116 595h27v3h-27zM1098 603h11v2h-11zM1098 644h6v2h-6zM1131 644h6v2h-6zM1098 651h6v2h-6zM1098 658h6v2h-6zM1131 658h4v2h-4zM1098 666h4v2h-4zM1098 673h10v2h-10z"
    />
    <text x="1130" y="267" fontSize="8" fill="#00ff00">Y-Project</text>
    <text x="1130" y="279" fontSize="8" fill="#00ff00">신축공사</text>
    <text x="1130" y="298" fontSize="7" fill={CYAN}>67278</text>
    <text x="1131" y="382" fontSize="9" fill="#ffb400" stroke="#ffb400">Chang-jo</text>
    <text x="1131" y="387" fontSize="5" fill="#fff">ARCHITECTS</text>
    <path d="M1099 388h46v2h17v2h-14v2h-12v2h-19v2h-18z" fill="#0000ff" />
    <text x="1130" y="625" fontSize="8" fill={CYAN}>입면도-3,4</text>
    <text x="1129" y="685" fontSize="8" fill={CYAN}>CA.A3.02</text>
    <path d="M1111 646h3v4h-3zM1111 653h3v4h-3zM1111 660h3v4h-3zM1111 667h9v3h-9zM1137 664h20v3h-20z" fill="#00ff00" />
    <path d="M1139 648h15v3h-15zM1139 652h15v4h-15z" fill={CYAN} />
  </g>
);

const Elevation = () => (
  <g fill="none" strokeWidth="1">
    {/* level heads and floor lines */}
    {LEVELS.map((y, i) => (
      <g key={y}>
        <path d={`M565 ${y}H593`} stroke="#ff00ff" />
        <path d={`M568.500 ${y - 4}l3.500 4-3.500 4-3.500-4z`} fill="#ff00ff" />
        <path d={i < 8 ? `M572 ${y - 3.5}h9v4h5v4h-14z` : `M572 ${y - 3.5}h8v4h6v4h-14z`} fill="#00ff00" />
        <path d={`M605 ${y}H615`} stroke="#fff" />
        <path d={`M615 ${y}H836`} stroke={i === 16 ? '#ffff00' : '#ff0000'} />
        {i < 16 && <path d={`M603 ${(y + LEVELS[i + 1]) / 2 - 3}h3v6h-3z`} fill="#00ff00" />}
      </g>
    ))}
    <path d="M598 364.500h8M598 633.500h8M599.500 364V634M606.500 364V634" stroke="#fff" />
    <path d="M596 496h3v7h-3z" fill="#00ff00" />

    {/* tower */}
    <path d="M708 366h72v25h-15v-10h-57z" fill="#333" />
    <path d="M710 369.500h58M710 372.500h58M710 375.500h58M710 378.500h58" stroke="#000" strokeDasharray="2 1" />
    <path d="M772 366.500h7.500v24H772" stroke="#808080" />
    <path d="M702.500 405V516" stroke="#808080" />
    <path d={vlines([707.5, 712.5, 717.5, 722.5, 727.5, 732.5, 737.5], 382, 620)} stroke={CYAN} />
    <path d={hlines(LEVELS.slice(2, 16).flatMap((y) => [y - 1, y + 5]), 706, 739)} stroke={CYAN} />
    <path d="M722 391.500h17" stroke={CYAN} />
    <path d={vlines(range(740.5, 765, 3), 381, 399) + vlines([768.5, 771.5, 773.5], 391, 399)} stroke={CYAN} />
    <path d="M739 399h41v107h-15v103l-26 12z" fill={CYAN} />
    <path d={vlines(range(743.5, 780, 4), 400, 606)} stroke="#000" />
    <path d={hlines(LEVELS.slice(1, 7), 739, 780)} stroke="#ff0000" />
    <path d="M708.500 366V381M708 366.500H769M769.500 366V381M708 381.500H735M705.500 381V620M739.500 399V620M707 382L739 398" stroke="#ffff00" />

    {/* link and entrance */}
    <path d="M698 516h7v2h-7zM698 613h7v2h-7z" fill={CYAN} />
    <path d="M765 516.500h8l45-16V601l-45 8h-8M705 620.500h34" stroke="#ffff00" />
    <path d="M819 500.500l4.500 8V603L775 609.500" stroke="#808080" />
    <path d={vlines([753.5, 757.5, 763.5, 769.5, 771.5, 773.5, 775.5, 777.5, 779.5], 611, 633)} stroke="#808080" />
    <path d={vlines([706.5, 708.5, 709.5, 716.5, 718.5, 719.5, 736.5, 739.5, 744.5, 747.5, 755.5, 760.5], 620, 633)} stroke="#fff" />
    <path d="M769.500 506v10M771.500 506v10M775.500 506v8M777.500 506v8M812.500 602l2 31M816.500 602V633M819.500 602l-1 31" stroke="#fff" />

    {/* podium */}
    <path d="M647.500 496.500h50v29h-50z" fill="#808080" stroke="#ffff00" />
    <path d="M648 533h24v100h-24z" fill="#808080" />
    <path d="M647.500 525v108M697.500 525v108M648 533.500h24M672.500 533v100M673 608.500h24M673 620.500h24" stroke="#ffff00" />
    <path d={vlines([650.5, 657.5, 665.5, 673.5, 680.5, 688.5], 526, 533)} stroke={CYAN} />
    <path d={vlines(range(674.5, 696, 3), 534, 586) + hlines(range(535.5, 587, 4), 673, 697)} stroke={CYAN} />
    <path d={vlines([674.5, 681.5, 688.5, 691.5], 587, 608)} stroke={CYAN} />
    <path d="M694.500 587V633M697.500 587V633" stroke="#fff" />

    {/* column grid */}
    {GRIDS.map((x) => (
      <g key={x}>
        <circle cx={x} cy="298.500" r="4.500" stroke="#ff00ff" />
        <path d={`M${x - 3} 297h6v4h-6z`} fill="#00ff00" />
        <path d={`M${x} 303v3`} stroke="#ff00ff" />
        <path d={`M${x} 326V655`} stroke="#ff0000" strokeDasharray="11 1 3 1" />
      </g>
    ))}
    <path d="M649 310.500h81M649 317.500h81M649.500 310v16M695.500 317v9M729.500 310v16" stroke="#fff" />
    <path d="M685 308h8v3h-8zM669 315h7v3h-7zM709 315h6v3h-6z" fill="#00ff00" />

    <text x="714" y="670" fontFamily={FONT} fontSize="10" fontWeight="bold" fill={CYAN}>A</text>
    <text x="723" y="667" fontFamily={FONT} fontSize="9" fill={CYAN}>입면도-3</text>
    <path d="M723 667h33v1h-33zM724 669h24v4h-24z" fill={CYAN} />
  </g>
);

const CanvasBox = styled.div`
  flex: 1;
  min-height: 0;
  display: flex;
  background: #000;
  cursor: crosshair;
  overflow: hidden;
  svg {
    width: 100%;
    height: auto;
    shape-rendering: crispEdges;
  }
`;

const Drawing = () => (
  <CanvasBox>
    <svg role="img" aria-label="A3-02 입면도">
      <g transform="translate(-320 -96)">
        <Sheet />
        <TitleBlock />
        <Elevation />
        <g shapeRendering="auto" fill="none" strokeLinecap="round" strokeLinejoin="round">
          <path d={CLOUD} stroke="#780606" strokeWidth="10" />
          <path d={CLOUD} stroke="#f01010" strokeWidth="7" />
        </g>
        <g fill="none" stroke="#0000ff">
          <path d="M342.500 783V873.500H397.500zM343 859.500h13.500v14" />
          <path d="M343 812l6.500 6 6.500-6M349.500 818v7M371 859l12 14M383 859l-12 14" />
        </g>
        <g fill="none" stroke="#fff">
          <path d="M320 782.500H4000M431.500 96V896M428.500 779.500h6v6h-6z" />
        </g>
      </g>
    </svg>
  </CanvasBox>
);

const Work = styled.div`
  flex: 1;
  min-width: 0;
  display: flex;
  flex-direction: column;
  padding-right: 6px;
  border-left: 2px solid #101010;
  background: linear-gradient(270deg, ${FACE} 3px, #fff 3px 4px, ${FACE} 4px);
`;
const TabRow = styled.div`
  flex: none;
  display: flex;
  height: 16px;
  border-top: 1px solid ${SHADOW};
`;
const NavButton = styled.button`
  width: 14px;
  display: flex;
  align-items: center;
  justify-content: center;
  border: 1px solid;
  border-color: #fff ${SHADOW} ${SHADOW} #fff;
`;
const TabShape = styled.span<{ $on?: boolean }>`
  display: flex;
  margin-left: ${(p) => (p.$on ? '-4px' : '2px')};
  padding: 0 1px 1px;
  background: ${(p) => (p.$on ? '#000' : SHADOW)};
  clip-path: polygon(0 0, 100% 0, calc(100% - 7px) 100%, 7px 100%);
  button {
    width: ${(p) => (p.$on ? 52 : 40)}px;
    background: ${(p) => (p.$on ? '#000' : FACE)};
    color: ${(p) => (p.$on ? '#fff' : '#000')};
    font-size: 12px;
    line-height: 14px;
    clip-path: polygon(0 0, 100% 0, calc(100% - 7px) 100%, 7px 100%);
  }
`;
const CommandDock = styled.section`
  flex: none;
  display: flex;
  margin-top: 1px;
  padding: 15px 0 2px 4px;
  height: 74px;
  background: linear-gradient(#fff 2px, ${FACE} 2px 5px, #202020 5px 7px, ${FACE} 7px);
`;
const CommandBox = styled.div`
  ${sunken}
  flex: 1;
  display: flex;
  flex-direction: column;
  padding: 1px 2px;
  background: #fff;
  font-family: ${MONO};
  font-size: 14px;
  line-height: 16px;
  p {
    margin: 0;
  }
  label {
    display: flex;
    margin: 3px -2px 0;
    padding: 2px 2px 0;
    border-top: 1px solid ${SHADOW};
  }
  input {
    flex: 1;
    outline: none;
  }
`;

/* ---------- status bar ---------- */

const StatusBar = styled.footer`
  flex: none;
  display: flex;
  align-items: center;
  height: 26px;
  padding: 3px 1px 3px 5px;
  gap: 4px;
  border-top: 1px solid ${SHADOW};
  box-shadow: inset 0 1px 0 #fff;
  font-size: 12px;
`;
const Coords = styled.output`
  width: 148px;
  height: 18px;
  padding: 0 2px;
  border: 1px solid;
  border-color: ${SHADOW} #fff #fff ${SHADOW};
  line-height: 16px;
`;
const Mode = styled.button<{ $on?: boolean; $w: number }>`
  width: ${(p) => p.$w}px;
  height: 18px;
  border: 1px solid;
  border-color: ${(p) => (p.$on ? '#000 #fff #fff #000' : `#fff ${SHADOW} ${SHADOW} #fff`)};
  line-height: 16px;
  text-align: center;
  white-space: nowrap;
`;
const Spacer = styled.span<{ $w?: number }>`
  flex: ${(p) => (p.$w ? 'none' : '1')};
  width: ${(p) => p.$w ?? 0}px;
`;
const TrayGroup = styled.div`
  display: flex;
  align-items: center;
  height: 18px;
  gap: 4px;
  padding: 0 2px;
  border: 1px solid;
  border-color: ${SHADOW} #fff #fff ${SHADOW};
`;
const TrayButton = styled.button`
  display: flex;
  align-items: center;
  justify-content: center;
  min-width: 16px;
`;

const MODES: [string, number, boolean][] = [
  ['스냅', 28, false], ['모눈', 28, false], ['직교', 28, true], ['극좌표', 40, false], ['OSNAP', 46, true],
  ['OTRACK', 54, true], ['DUCS', 37, true], ['DYN', 29, false], ['LWT', 29, false], ['도면', 28, true],
];

/* ---------- balloons ---------- */

const Balloons = styled.div`
  position: absolute;
  right: 7px;
  bottom: 14px;
  width: 310px;
  height: 92px;
  > svg {
    position: absolute;
    inset: 0;
  }
`;
const Balloon = styled.div<{ $x: number; $w: number; $small?: boolean }>`
  position: absolute;
  left: ${(p) => p.$x}px;
  top: 1px;
  width: ${(p) => p.$w}px;
  height: 70px;
  padding: 6px 0 0 ${(p) => (p.$small ? 14 : 15)}px;
  font-size: ${(p) => (p.$small ? 12 : 13)}px;
  line-height: 18px;
  white-space: nowrap;
  header {
    display: flex;
    align-items: center;
    gap: 9px;
    height: 20px;
    margin-left: -6px;
    font-weight: bold;
  }
  p {
    margin: 1px 0 0;
  }
  a {
    color: #0000ff;
  }
`;
const BalloonClose = styled.button`
  position: absolute;
  right: 8px;
  top: 9px;
  width: 16px;
  height: 16px;
  display: flex;
  align-items: center;
  justify-content: center;
  border: 1px solid ${SHADOW};
  background: ${FACE};
`;

const Notifications = () => (
  <Balloons role="status">
    <svg width="310" height="92" aria-hidden="true">
      <path d="M14 .5H280V73.500H186.500V90L168 73.500H14Q7 70 .5 60V14Q7 4 14 .500z" fill="#ffffe1" stroke="#000" />
      <path d="M44 .5H296Q306 4 309.500 14V60Q306 70 296 73.500H244.500V92L226 73.500H44Q34 70 30.500 60V14Q34 4 44 .500z" fill="#ffffe1" stroke="#000" />
    </svg>
    <Balloon $x={0} $w={30} $small>
      <header><Icon name="info" size={17} /></header>
      <p>오.</p>
      <a href="#plot">플.</a>
    </Balloon>
    <Balloon $x={30} $w={279}>
      <header><Icon name="info" size={17} />비조정 새 도면층</header>
      <p>조정해야 할 수 있는 새 도면층이 있습니다.</p>
      <a href="#layers">도면층 특성 관리자에서 비조정 새 도면층 보기</a>
      <BalloonClose aria-label="닫기">
        <svg width="8" height="8"><path d="M0 0l8 8M8 0L0 8" stroke="#000" strokeWidth="2" /></svg>
      </BalloonClose>
    </Balloon>
  </Balloons>
);

export default function App() {
  return (
    <Shell>
      <Global />
      <TitleBar>
        <Icon name="app" />
        <h1>AutoCAD 2008 - [C:₩Work₩Y-Project₩080400 실시설계₩A3-02 입면도-2.dwg]</h1>
        <Controls />
      </TitleBar>
      <MenuBar>
        <Icon name="dwg" size={15} />
        <ul>
          {MENUS.map(([a, u, b]) => (
            <li key={a + u}>
              <MenuButton>{a}<u>{u}</u>{b}</MenuButton>
            </li>
          ))}
        </ul>
        <HelpSearch>
          <input type="text" aria-label="도움말 검색" placeholder="도움말을 원하는 질문 입력" />
          <HelpTools>
            <button aria-label="검색"><Icon name="search" size={14} />{tri('M0 0h5L2.500 3z', 5, 3)}</button>
            <button aria-label="통신 센터"><Icon name="satellite" size={14} /></button>
            <button aria-label="즐겨찾기"><Icon name="star" size={14} /></button>
          </HelpTools>
        </HelpSearch>
        <Controls restore />
      </MenuBar>
      <ToolRow>
        <Toolbar>
          <Grip />
          <Tools items={STANDARD} />
        </Toolbar>
        <Toolbar>
          <Grip />
          <Tools items={DIMENSION} />
          <Combo w={120} value="STANDARD" label="치수 스타일" lead={<Spacer $w={10} />} />
          <Tools items={['dimStyle']} />
        </Toolbar>
      </ToolRow>
      <ToolRow>
        <Toolbar>
          <Grip />
          <Tools items={['layers']} />
          <Combo
            w={300}
            value="0"
            label="도면층"
            lead={<><Icon name="bulb" /><Icon name="sun" /><Icon name="sunPage" /><Icon name="unlock" size={17} /><Swatch /></>}
          />
          <Tools items={['layerCur', 'layerPrev', 'layerState']} />
        </Toolbar>
        <Toolbar>
          <Grip />
          <Combo w={148} value="ByLayer" label="색상" lead={<Swatch />} />
          <Sep $w={8} />
          <Combo w={158} value="ByLayer" label="선종류" lead={<Rule $w={60} />} />
          <Sep $w={8} />
          <Combo w={123} value="ByLayer" label="선가중치" lead={<Rule $w={35} />} />
          <Sep $w={8} />
          <Combo w={119} off value="ByColor" label="플롯 스타일" lead={<Spacer $w={3} />} />
        </Toolbar>
        <Toolbar>
          <Grip />
          <Tools items={['refEdit', '|']} />
          <RefName aria-label="참조 이름" disabled />
          <Tools items={['|', 'refAdd', 'refSub', 'refDiscard', 'refSave']} />
        </Toolbar>
      </ToolRow>
      <Main>
        <Strip>
          <StripTab $h={444}>
            <Icon name="center" />
            <Sideways $below={157}>DESIGNCENTER</Sideways>
          </StripTab>
          <StripTab>
            <Icon name="sheets" />
            <Sideways $below={160}>시트 세트 관리자</Sideways>
          </StripTab>
        </Strip>
        <Palettes>
          <Properties />
          <Divider />
          <References />
        </Palettes>
        <Work>
          <Drawing />
          <TabRow>
            <NavButton aria-label="처음">{tri('M0 0h1v9H0zM8 0v9L3 4.500z', 8, 9, SHADOW)}</NavButton>
            <NavButton aria-label="이전">{tri('M5 0v9L0 4.500z', 5, 9, SHADOW)}</NavButton>
            <NavButton aria-label="다음">{tri('M0 0v9l5-4.500z', 5, 9, SHADOW)}</NavButton>
            <NavButton aria-label="마지막">{tri('M7 0h1v9H7zM0 0v9l5-4.500z', 8, 9, SHADOW)}</NavButton>
            <TabShape><button>모형</button></TabShape>
            <TabShape $on><button>A3-02</button></TabShape>
          </TabRow>
          <CommandDock>
            <Grip $h={54} />
            <CommandBox>
              <p>명령: *취소*</p>
              <p>명령: *취소*</p>
              <label>
                명령:
                <input type="text" aria-label="명령" />
              </label>
            </CommandBox>
          </CommandDock>
        </Work>
      </Main>
      <StatusBar>
        <Coords>-95.04, -92.49, 0.00</Coords>
        {MODES.map(([t, w, on]) => (
          <Mode key={t} $w={w} $on={on} aria-pressed={on}>{t}</Mode>
        ))}
        <Spacer $w={12} />
        <NavButton aria-label="이전 뷰포트">{tri('M5 2v9L0 6.500z', 5, 14, '#a8a49c')}</NavButton>
        <TrayButton aria-label="뷰포트 최대화"><Icon name="viewport" size={17} /></TrayButton>
        <NavButton aria-label="다음 뷰포트">{tri('M0 2v9l5-4.500z', 5, 14, '#a8a49c')}</NavButton>
        <Spacer />
        <TrayButton aria-label="주석 가시성"><Icon name="annot" /></TrayButton>
        <Spacer $w={1} />
        <TrayButton aria-label="주석 자동"><Icon name="annotDim" /></TrayButton>
        <Spacer $w={2} />
        <TrayGroup>
          {['padlock', 'notes', 'standards', 'tag', 'warn'].map((n) => (
            <TrayButton key={n} aria-label={n}><Icon name={n} /></TrayButton>
          ))}
        </TrayGroup>
        <TrayButton aria-label="트레이 설정">{tri('M0 0h7L3.500 4z', 7, 4)}</TrayButton>
        <TrayButton aria-label="화면 정리"><Icon name="screen" /></TrayButton>
        <svg width="12" height="14" aria-hidden="true">
          <path d="M0 14L12 2M4 14l8-8M8 14l4-4" stroke={SHADOW} strokeWidth="1.500" />
        </svg>
      </StatusBar>
      <Notifications />
    </Shell>
  );
}
